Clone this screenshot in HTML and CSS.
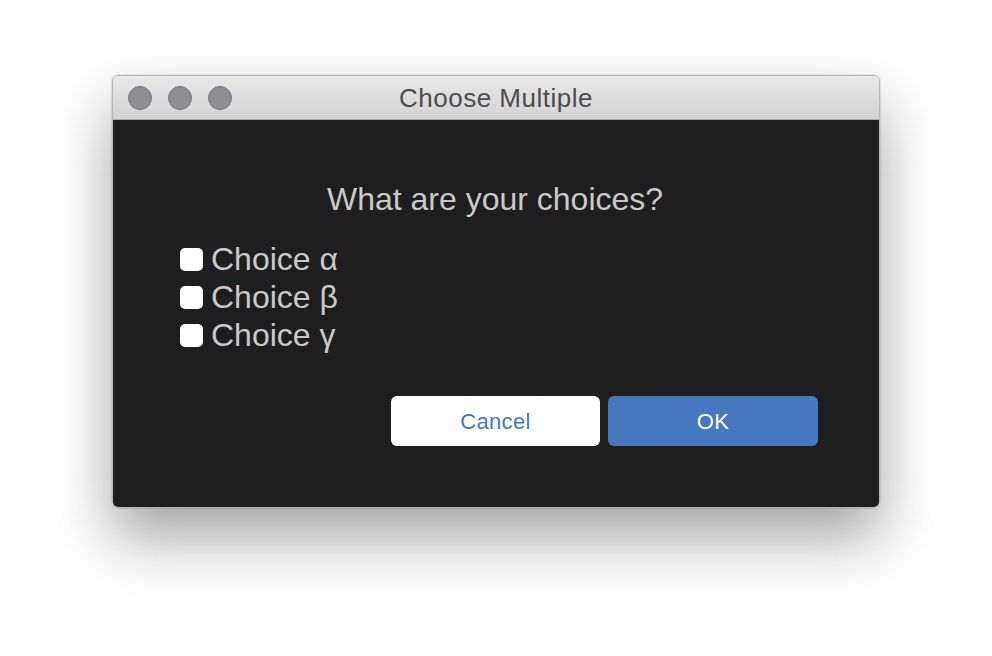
FILE: index.html
```html
<!DOCTYPE html>
<html>
<head>
<meta charset="utf-8">
<link rel="stylesheet" href="styles.css">
</head>
<body>
<div class="window">
  <div class="titlebar">
    <div class="lights">
      <span class="light"></span>
      <span class="light"></span>
      <span class="light"></span>
    </div>
    <div class="title">Choose Multiple</div>
  </div>
  <div class="content">
    <div class="question">What are your choices?</div>
    <div class="choices">
      <label class="choice"><span class="box"></span><span class="label">Choice α</span></label>
      <label class="choice"><span class="box"></span><span class="label">Choice β</span></label>
      <label class="choice"><span class="box"></span><span class="label">Choice γ</span></label>
    </div>
    <div class="buttons">
      <button class="btn cancel">Cancel</button>
      <button class="btn ok">OK</button>
    </div>
  </div>
</div>
</body>
</html>
```

FILE: styles.css
```css
html, body {
  margin: 0;
  padding: 0;
  background: #ffffff;
  width: 992px;
  height: 656px;
  overflow: hidden;
  font-family: "Liberation Sans", Arial, sans-serif;
}
.window {
  margin: 75px 0 0 112px;
  width: 768px;
  height: 433px;
  box-sizing: border-box;
  border-radius: 6px;
  overflow: hidden;
  border: 1px solid #b5b5b5;
  display: flex;
  flex-direction: column;
  box-shadow: 0 30px 60px rgba(0,0,0,0.36), 0 0 0 0.5px rgba(0,0,0,0.15);
}
.titlebar {
  position: relative;
  height: 43px;
  flex: none;
  background: linear-gradient(#e9e9e9, #d3d3d3);
  border-bottom: 1px solid #a9a9a9;
  display: flex;
  align-items: center;
  justify-content: center;
}
.lights {
  position: absolute;
  left: 15px;
  top: 10px;
  display: flex;
  gap: 16px;
}
.light {
  width: 22px;
  height: 22px;
  border-radius: 50%;
  background: #8e8d92;
  border: 1px solid #76757a;
}
.title {
  font-size: 26px;
  letter-spacing: 0.5px;
  color: #4d4d4d;
  padding-top: 2px;
}
.content {
  flex: 1;
  background: #1e1e1e;
  display: flex;
  flex-direction: column;
  padding: 60px 61px 0 67px;
}
.question {
  text-align: center;
  color: #c9c9c9;
  font-size: 32px;
  line-height: 38px;
  padding-right: 8px;
  margin-bottom: 22px;
}
.choices {
  display: flex;
  flex-direction: column;
}
.choice {
  display: flex;
  align-items: center;
  gap: 8px;
  height: 38px;
}
.box {
  width: 23px;
  height: 23px;
  border-radius: 5px;
  background: #ffffff;
}
.label {
  color: #c9c9c9;
  font-size: 32px;
  line-height: 38px;
}
.buttons {
  display: flex;
  justify-content: flex-end;
  gap: 8px;
  margin-top: 42px;
}
.btn {
  width: 209px;
  height: 50px;
  border: none;
  border-radius: 6px;
  font-family: "Liberation Sans", Arial, sans-serif;
  font-size: 22px;
  letter-spacing: 0.3px;
  padding: 2px 0 0;
}
.cancel {
  background: #ffffff;
  color: #4479c1;
}
.ok {
  width: 210px;
  background: #4578bf;
  color: #ffffff;
}
```
